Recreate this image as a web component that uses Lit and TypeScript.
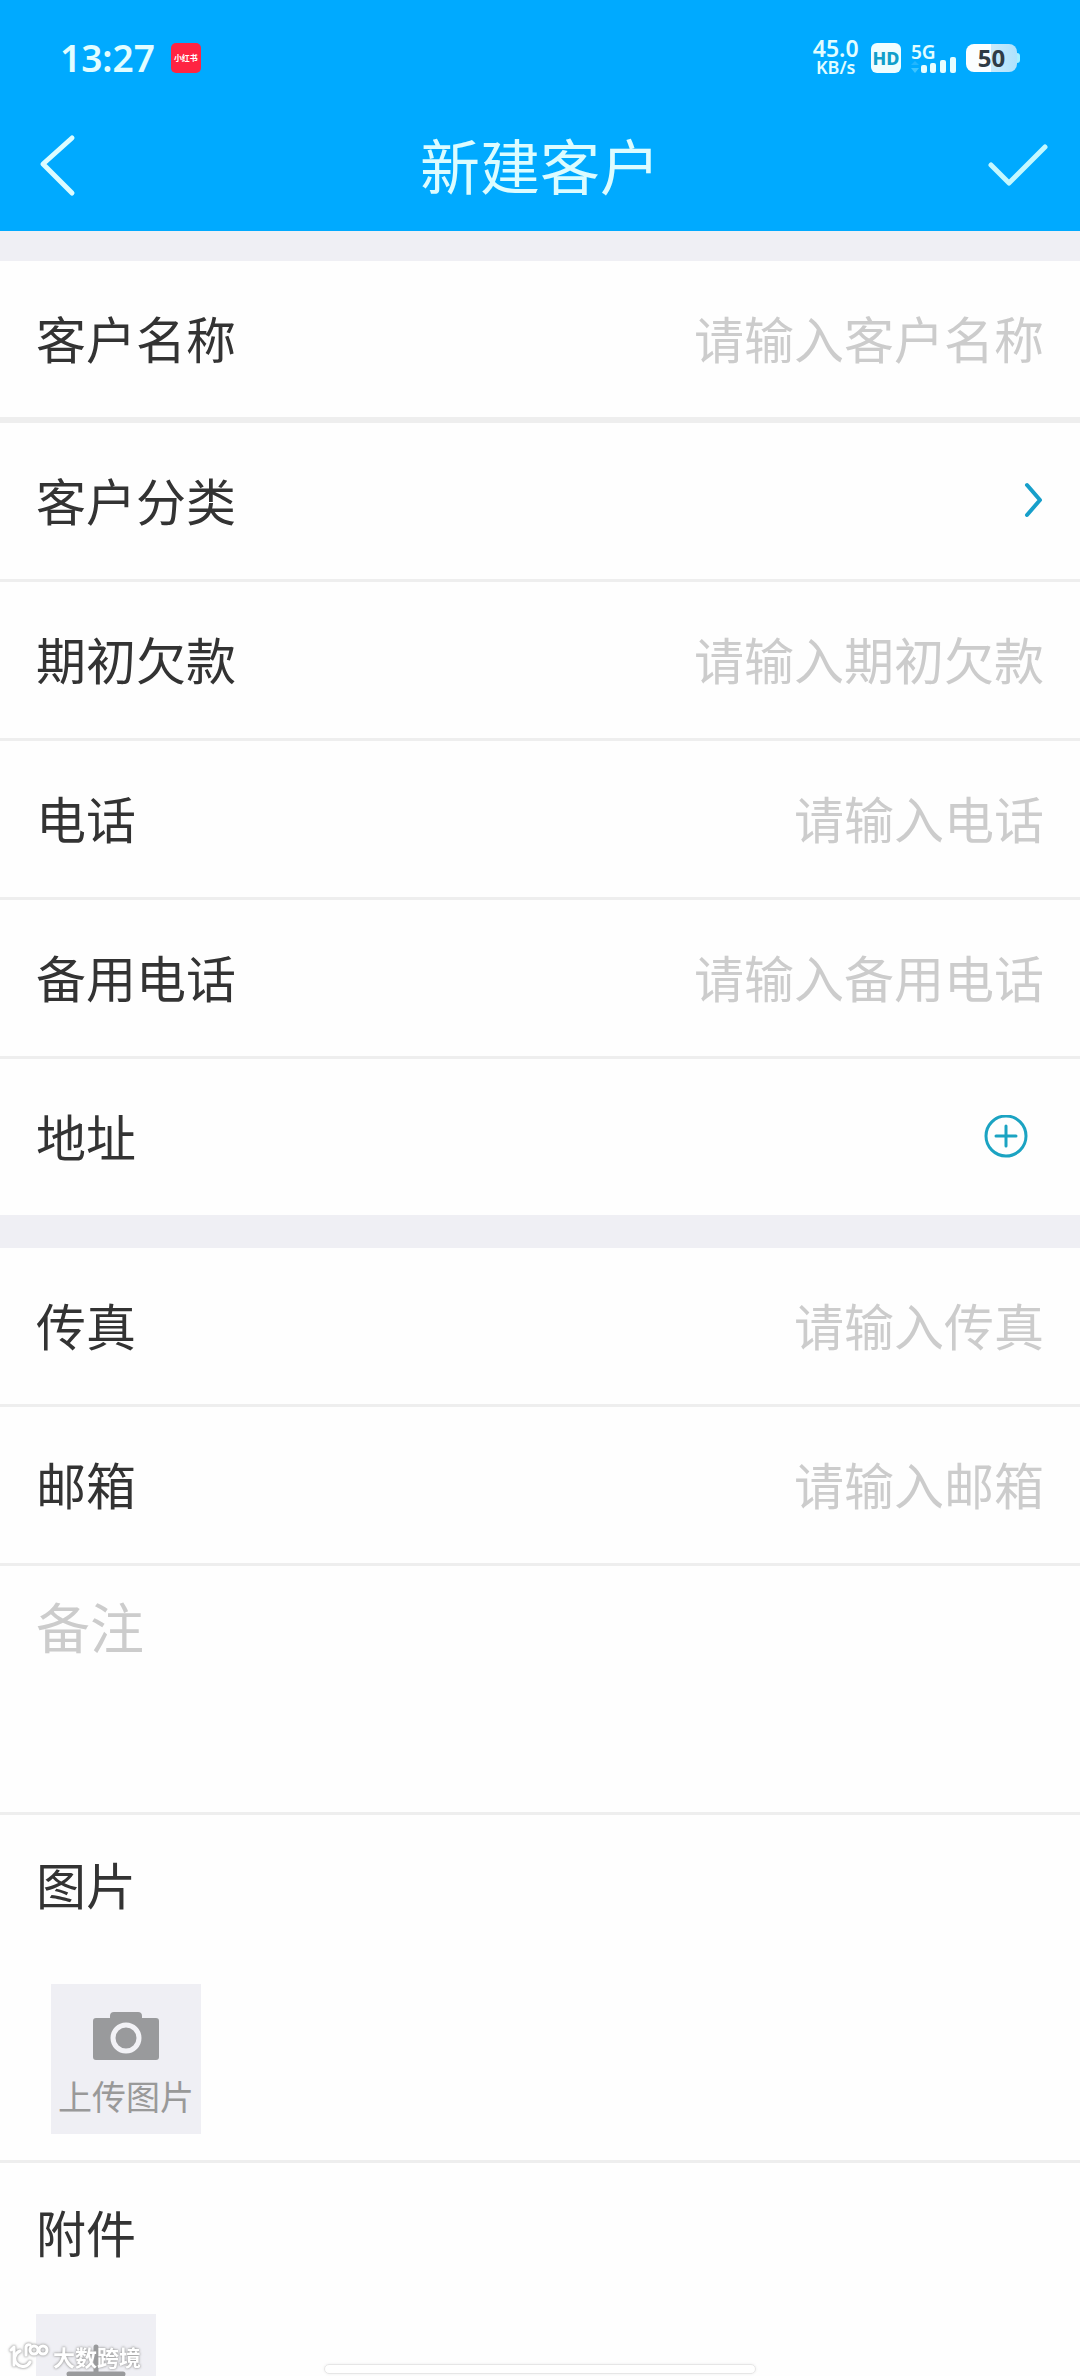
import { LitElement, html, css, svg } from "lit";
import { customElement, property } from "lit/decorators.js";

const sans = css`"Noto Sans CJK SC", "Noto Sans", sans-serif`;

@customElement("status-bar")
class StatusBar extends LitElement {
  static styles = css`
    :host {
      display: flex;
      align-items: center;
      justify-content: space-between;
      box-sizing: border-box;
      height: 100px;
      padding: 16px 60px 0;
      color: #e2fdff;
      font-family: "Noto Sans", sans-serif;
      font-weight: 600;
    }
    .side {
      display: flex;
      align-items: center;
    }
    .left {
      gap: 16px;
    }
    .right {
      gap: 10px;
    }
    .clock {
      font-size: 37px;
      line-height: 40px;
    }
    .app {
      display: flex;
      align-items: center;
      justify-content: center;
      width: 30px;
      height: 30px;
      border-radius: 5px;
      background: #ff2442;
      color: #fff;
      font: 700 8px/12px ${sans};
    }
    .speed {
      text-align: center;
      font-weight: 600;
      font-size: 18px;
      line-height: 19px;
    }
    .speed::first-line {
      font-size: 23px;
    }
    svg {
      display: block;
    }
    .hd {
      width: 30px;
      height: 30px;
      border-radius: 6px;
      background: #effdff;
      color: #119fcb;
      font-weight: 800;
      font-size: 18px;
      line-height: 30px;
      text-align: center;
    }
    .net {
      display: flex;
      flex-direction: column;
      width: 45px;
      font-size: 19px;
      line-height: 18px;
    }
    .net svg {
      margin-top: -4px;
    }
    .battery {
      display: flex;
      align-items: center;
    }
    .level {
      width: 51px;
      height: 28px;
      border-radius: 8px;
      background: linear-gradient(90deg, #fbfeff 50%, #c9eafb 50%, #aee2fd);
      color: #2f3c46;
      font-weight: 700;
      font-size: 24px;
      line-height: 28px;
      text-align: center;
    }
    .nub {
      width: 3px;
      height: 10px;
      border-radius: 0 3px 3px 0;
      background: #a6f0ff;
    }
  `;

  render() {
    return html`
      <div class="side left">
        <span class="clock">13:27</span>
        <span class="app">小红书</span>
      </div>
      <div class="side right">
        <div class="speed">45.0<br />KB/s</div>
        <div class="hd">HD</div>
        <div class="net">
          5G
          <svg width="45" height="16" viewBox="0 0 45 16">
            <path d="M0 8l4-4 4 4z" fill="#22b6ff" />
            <path d="M0 11h8l-4 5z" fill="#3cc4ff" />
            <g fill="#e6fdff">
              <rect x="10" y="8" width="6" height="8" rx="2" />
              <rect x="19" y="6" width="6" height="10" rx="2" />
              <rect x="29" y="3" width="6" height="13" rx="2" />
              <rect x="39" y="0" width="6" height="16" rx="2" />
            </g>
          </svg>
        </div>
        <div class="battery">
          <div class="level">50</div>
          <div class="nub"></div>
        </div>
      </div>
    `;
  }
}

@customElement("form-field")
class FormField extends LitElement {
  @property() label = "";
  @property() type = "text";

  static styles = css`
    :host {
      display: block;
    }
    .row {
      display: flex;
      align-items: center;
      height: 156px;
      padding: 0 36px;
      background: #fefefe;
      font: 400 50px/72px ${sans};
    }
    label {
      flex: none;
      padding-bottom: 4px;
      color: #333;
    }
    input {
      flex: 1;
      min-width: 0;
      height: 72px;
      padding: 0 0 4px;
      border: 0;
      outline: 0;
      background: none;
      color: #333;
      font: inherit;
      text-align: right;
    }
    input::placeholder {
      color: #ccc;
      opacity: 1;
    }
  `;

  render() {
    return html`
      <div class="row">
        <label for="value">${this.label}</label>
        <input id="value" type=${this.type} placeholder=${"请输入" + this.label} />
      </div>
    `;
  }
}

const camera = svg`
  <path d="M3 6H17V4A4 4 0 0 1 21 0H45A4 4 0 0 1 49 4V6H63A3 3 0 0 1 66 9V45A3 3 0 0 1 63 48H3A3 3 0 0 1 0 45V9A3 3 0 0 1 3 6Z" fill="#999a9c" />
  <circle cx="33" cy="26" r="13" fill="none" stroke="#f2f2f6" stroke-width="5" />
`;

@customElement("app-root")
class AppRoot extends LitElement {
  static styles = css`
    :host {
      display: flex;
      flex-direction: column;
      position: relative;
      height: 100vh;
      overflow: hidden;
      background: #fefefe;
      color: #333;
      font: 400 50px/72px ${sans};
    }
    button {
      padding: 0;
      border: 0;
      background: none;
      color: inherit;
      font: inherit;
      cursor: pointer;
    }
    svg {
      display: block;
      flex: none;
      fill: none;
      stroke-linecap: round;
      stroke-linejoin: round;
    }
    .header {
      flex: none;
      background: #00aaff;
      color: #dcfcff;
    }
    .nav {
      display: grid;
      grid-template-columns: 120px 1fr 120px;
      align-items: center;
      height: 131px;
    }
    .nav h1 {
      margin: 0;
      padding-bottom: 4px;
      font-weight: 400;
      font-size: 60px;
      line-height: 88px;
      text-align: center;
    }
    .nav button {
      display: flex;
      align-items: center;
      height: 100px;
      padding: 0 32px 0 36px;
    }
    .nav .done {
      justify-content: flex-end;
    }
    .content {
      flex: 1;
      min-height: 0;
      overflow-y: auto;
      scrollbar-width: none;
      background: #efeff4;
    }
    .group {
      display: flex;
      flex-direction: column;
      gap: 3px;
      background: #eee;
    }
    .first {
      margin-top: 30px;
      padding-bottom: 6px;
    }
    .second {
      margin-top: 33px;
    }
    .row {
      display: flex;
      align-items: center;
      justify-content: space-between;
      box-sizing: border-box;
      width: 100%;
      height: 156px;
      padding: 0 36px;
      background: #fefefe;
      text-align: left;
    }
    .label {
      padding-bottom: 4px;
    }
    .add {
      display: flex;
      align-items: center;
      justify-content: center;
      width: 76px;
      height: 76px;
    }
    textarea {
      display: block;
      box-sizing: border-box;
      width: 100%;
      height: 246px;
      padding: 28px 36px;
      border: 0;
      outline: 0;
      resize: none;
      background: #fefefe;
      color: #333;
      font: 400 54px/64px ${sans};
    }
    textarea::placeholder {
      color: #ccc;
      opacity: 1;
    }
    .section {
      padding: 0 36px 26px;
      background: #fefefe;
    }
    .section h2 {
      margin: 0;
      padding-bottom: 8px;
      font-weight: 400;
      font-size: 50px;
      line-height: 136px;
    }
    .upload {
      display: flex;
      flex-direction: column;
      align-items: center;
      justify-content: center;
      gap: 16px;
      box-sizing: border-box;
      width: 150px;
      height: 150px;
      margin: 25px 15px 0;
      padding-top: 10px;
      background: #efeff4;
      color: #999;
      font-size: 34px;
      line-height: 40px;
      white-space: nowrap;
    }
    .attach {
      display: flex;
      align-items: center;
      justify-content: center;
      width: 120px;
      height: 120px;
      margin-top: 7px;
      background: #efeff4;
    }
    .home {
      position: absolute;
      bottom: 2px;
      left: 50%;
      box-sizing: border-box;
      width: 40%;
      height: 10px;
      border: 1px solid #e6e6e6;
      border-radius: 5px;
      background: #fff;
      box-shadow: 0 0 3px #eee;
      transform: translateX(-50%);
    }
    .mark {
      position: absolute;
      bottom: 4px;
      left: 8px;
      display: flex;
      align-items: center;
      gap: 4px;
      color: #fff;
      font-weight: 700;
      font-size: 22px;
      line-height: 32px;
      text-shadow: 0 0 3px #999, 0 0 2px #aaa;
      pointer-events: none;
    }
    .mark svg {
      filter: drop-shadow(0 0 1px #aaa) drop-shadow(0 0 1px #bbb);
    }
  `;

  render() {
    return html`
      <header class="header">
        <status-bar></status-bar>
        <div class="nav">
          <button class="back" aria-label="返回">
            <svg width="42" height="64" viewBox="0 0 42 64" stroke="#dcfcff" stroke-width="5">
              <path d="M36 4L7 30L36 59" />
            </svg>
          </button>
          <h1>新建客户</h1>
          <button class="done" aria-label="完成">
            <svg width="64" height="48" viewBox="0 0 64 48" stroke="#c4f8ff" stroke-width="5">
              <path d="M7 23L25 41L61 5" />
            </svg>
          </button>
        </div>
      </header>
      <main class="content">
        <div class="group first">
          <form-field label="客户名称"></form-field>
        </div>
        <div class="group">
          <button class="row">
            <span class="label">客户分类</span>
            <svg width="22" height="40" viewBox="0 0 22 40" stroke="#179fca" stroke-width="4">
              <path d="M5 4L18 19L5 34" />
            </svg>
          </button>
          <form-field label="期初欠款" type="text"></form-field>
          <form-field label="电话" type="tel"></form-field>
          <form-field label="备用电话" type="tel"></form-field>
          <div class="row">
            <span class="label">地址</span>
            <button class="add" aria-label="添加地址">
              <svg width="44" height="44" viewBox="0 0 44 44" stroke="#1ba3c2" stroke-width="3">
                <circle cx="22" cy="21" r="20" />
                <path d="M12 21H32M22 11V31" />
              </svg>
            </button>
          </div>
        </div>
        <div class="group second">
          <form-field label="传真" type="tel"></form-field>
          <form-field label="邮箱" type="email"></form-field>
          <textarea placeholder="备注" aria-label="备注"></textarea>
          <section class="section">
            <h2>图片</h2>
            <button class="upload">
              <svg width="66" height="48" viewBox="0 0 66 48">${camera}</svg>
              上传图片
            </button>
          </section>
          <section class="section">
            <h2>附件</h2>
            <button class="attach" aria-label="添加附件">
              <svg width="60" height="60" viewBox="0 0 60 60" stroke="#999a9c" stroke-width="5">
                <path d="M3 30H57M30 3V57" />
              </svg>
            </button>
          </section>
        </div>
      </main>
      <div class="mark">
        <svg width="41" height="28" viewBox="0 0 41 28" stroke="#fff" stroke-width="3">
          <path d="M3 8L6 5V23" />
          <path d="M12 9A8 8 0 1 0 22 20" />
          <path d="M18 13V5Q19 2 22 3" />
          <circle cx="26" cy="8" r="4" />
          <circle cx="35" cy="8" r="4" />
        </svg>
        大数跨境
      </div>
      <div class="home"></div>
    `;
  }
}
